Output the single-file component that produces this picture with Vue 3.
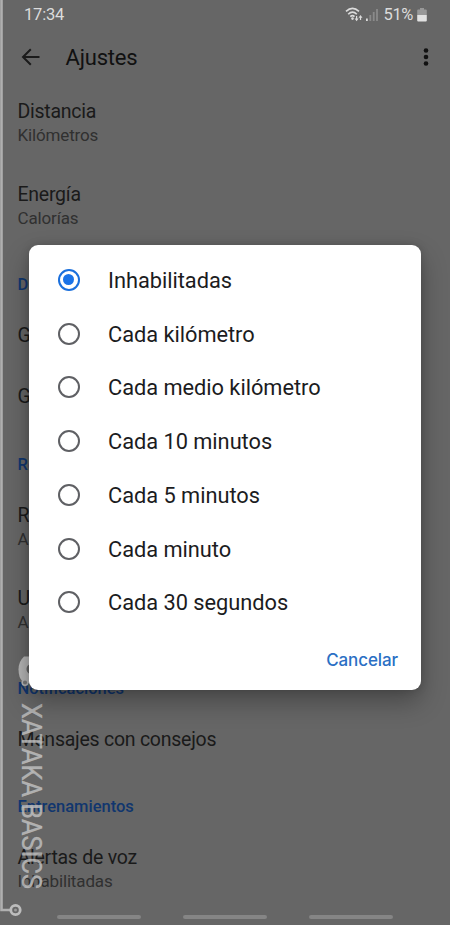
<script setup>
import { ref } from 'vue'

const options = [
  'Inhabilitadas',
  'Cada kilómetro',
  'Cada medio kilómetro',
  'Cada 10 minutos',
  'Cada 5 minutos',
  'Cada minuto',
  'Cada 30 segundos'
]

const selected = ref('Inhabilitadas')
const open = ref(true)

const settings = [
  { title: 'Distancia', value: 'Kilómetros' },
  { title: 'Energía', value: 'Calorías' },
  { header: 'D' },
  { title: 'G' },
  { title: 'G' },
  { header: 'Re' },
  { title: 'R', value: 'A' },
  { title: 'U', value: 'A' },
  { header: 'Notificaciones' },
  { title: 'Mensajes con consejos' },
  { header: 'Entrenamientos' },
  { title: 'Alertas de voz', value: 'Inhabilitadas' }
]
</script>

<template>
  <div class="screen">
    <header class="status-bar">
      <span class="clock">17:34</span>
      <div class="status-icons">
        <svg class="wifi" width="18" height="15" viewBox="0 0 18 15" fill="none">
          <path d="M1 4.4Q7.5-1.6 14 4.4M3.2 7.2Q7.5 3 11.8 7.2M5.3 9.6Q7.5 7.6 9.5 9.6" stroke="#dcdcdc" stroke-width="1.6" />
          <circle cx="7.5" cy="11.6" r="1.3" fill="#dcdcdc" />
          <path d="M9.6 11.4h4l-2 2.9zM13.5 10.8h4l-2-2.9z" fill="#dcdcdc" />
          <path d="M11.6 9v3M15.5 10v3" stroke="#dcdcdc" stroke-width="1.2" />
        </svg>
        <svg class="signal" width="12" height="13" viewBox="0 0 12 13">
          <path d="M0 10.5h1.8v2.5H0z" fill="#dcdcdc" />
          <path d="M3.4 7h1.8v6H3.4zM6.8 4h1.8v9H6.8zM10.1 1h1.8v12h-1.8z" fill="#8a8a8a" />
        </svg>
        <span class="percent">51%</span>
        <svg class="battery" width="10" height="14" viewBox="0 0 10 14">
          <path d="M3 0h4v1.5h1.8a1 1 0 0 1 1 1V7H.2V2.5a1 1 0 0 1 1-1H3z" fill="#989898" />
          <path d="M.2 7h9.6v5.5a1 1 0 0 1-1 1H1.2a1 1 0 0 1-1-1z" fill="#e2e2e2" />
        </svg>
      </div>
    </header>

    <div class="toolbar">
      <svg class="back" width="20" height="18" viewBox="0 0 20 18" fill="none" stroke="#1b1b1b" stroke-width="2">
        <path d="M18.5 9H2M9.8 1.2L2 9l7.8 7.8" />
      </svg>
      <h1>Ajustes</h1>
      <svg class="more" width="6" height="20" viewBox="0 0 6 20" fill="#111">
        <circle cx="3" cy="3.5" r="2.3" />
        <circle cx="3" cy="10" r="2.3" />
        <circle cx="3" cy="16.5" r="2.3" />
      </svg>
    </div>

    <main class="settings">
      <template v-for="(item, i) in settings" :key="i">
        <h2 v-if="item.header" class="section">{{ item.header }}</h2>
        <div v-else class="item" :class="{ double: item.value }">
          <span class="title">{{ item.title }}</span>
          <span v-if="item.value" class="value">{{ item.value }}</span>
        </div>
      </template>
    </main>

    <nav class="nav-hints">
      <span></span>
      <span></span>
      <span></span>
    </nav>

    <svg class="watermark" width="50" height="925" viewBox="0 0 50 925">
      <path d="M1.5 0V910H10" fill="none" stroke="#b0b0b0" stroke-width="2.6" />
      <circle cx="15.5" cy="910" r="4.7" fill="none" stroke="#bcbcbc" stroke-width="2.8" />
      <circle cx="15.5" cy="910" r="1.5" fill="#999" />
      <path d="M30 656.5h-6q-5.5 5-5.500 13t4 12l7.500 2z" fill="#b5b5b5" />
      <path d="M30 664q-3.500 1.500-3.500 5t3.500 5" fill="#666" />
      <circle cx="25" cy="682.5" r="2.8" fill="#777" stroke="#b5b5b5" stroke-width="1.5" />
      <text transform="translate(22.3 703) rotate(90)" textLength="186" lengthAdjust="spacingAndGlyphs">XATAKA BASICS</text>
    </svg>

    <div v-if="open" class="overlay">
      <div class="dialog" role="dialog">
        <div class="options">
          <label v-for="option in options" :key="option" class="option">
            <input v-model="selected" type="radio" name="voice" :value="option" />
            <span class="radio"></span>
            <span class="label">{{ option }}</span>
          </label>
        </div>
        <div class="actions">
          <button class="cancel" @click="open = false">Cancelar</button>
        </div>
      </div>
    </div>
  </div>
</template>

<style>
body {
  background: #666;
}
</style>

<style scoped>
.screen {
  position: relative;
  width: 450px;
  height: 925px;
  overflow: hidden;
  box-sizing: border-box;
  background: #666;
  font-family: Roboto, sans-serif;
  display: flex;
  flex-direction: column;
}

.status-bar {
  height: 29px;
  flex: none;
  padding: 0 23px 0 24px;
  display: flex;
  align-items: center;
  justify-content: space-between;
  color: #dcdcdc;
  font-size: 16.5px;
}

.clock {
  letter-spacing: -0.2px;
}

.percent {
  letter-spacing: -0.4px;
}

.status-icons {
  display: flex;
  align-items: center;
}

.signal {
  margin: 0 6px 0 3px;
}

.battery {
  margin-left: 4px;
}

.toolbar {
  height: 53px;
  flex: none;
  padding: 2px 21px 0 21px;
  box-sizing: border-box;
  display: flex;
  align-items: center;
}

.toolbar h1 {
  margin: 0 auto 0 24.5px;
  padding-top: 1px;
  font-size: 22px;
  font-weight: 400;
  letter-spacing: -0.2px;
  color: #111;
}

.settings {
  flex: 1;
  padding-left: 17.5px;
}

.section {
  height: 57.8px;
  margin: 0;
  padding-top: 27px;
  box-sizing: border-box;
  font-size: 16.5px;
  line-height: 20px;
  font-weight: 500;
  color: #11366e;
}

.item {
  height: 61px;
  padding-bottom: 1px;
  box-sizing: border-box;
  display: flex;
  flex-direction: column;
  justify-content: center;
}

.item.double {
  height: 83px;
}

.title {
  font-size: 19.5px;
  line-height: 25px;
  letter-spacing: -0.25px;
  color: #1a1a1a;
}

.value {
  font-size: 17px;
  line-height: 23px;
  letter-spacing: -0.15px;
  color: #303030;
}

.nav-hints {
  position: absolute;
  left: 57px;
  bottom: 6px;
  display: flex;
  gap: 42px;
}

.nav-hints span {
  width: 84px;
  height: 4px;
  border-radius: 2px;
  background: #858585;
}

.watermark {
  position: absolute;
  left: 0;
  top: 0;
}

.watermark text {
  font-size: 27px;
  fill: #c4c4c4;
  fill-opacity: 0.8;
  stroke: #c4c4c4;
  stroke-opacity: 0.5;
  stroke-width: 0.5px;
}

.overlay {
  position: absolute;
  inset: 0;
  padding: 245px 29px 0;
}

.dialog {
  height: 445px;
  box-sizing: border-box;
  padding-top: 8px;
  background: #fff;
  border-radius: 9px;
  box-shadow: 0 12px 26px rgba(0, 0, 0, 0.3), 0 0 8px rgba(0, 0, 0, 0.15);
}

.option {
  height: 53.75px;
  padding-left: 28.5px;
  display: flex;
  align-items: center;
  cursor: pointer;
}

.option input {
  position: absolute;
  opacity: 0;
}

.radio {
  width: 22px;
  height: 22px;
  box-sizing: border-box;
  border: 2px solid #5f6064;
  border-radius: 50%;
  display: flex;
  align-items: center;
  justify-content: center;
}

.option input:checked + .radio {
  border-color: #1a6fdc;
}

.option input:checked + .radio::after {
  content: '';
  width: 11px;
  height: 11px;
  border-radius: 50%;
  background: #1a73e8;
}

.label {
  margin-left: 28.5px;
  padding-top: 1px;
  font-size: 21.8px;
  letter-spacing: -0.03px;
  color: #1c1c1e;
}

.actions {
  display: flex;
  justify-content: flex-end;
  padding: 18.5px 23px 0;
}

.cancel {
  border: none;
  background: none;
  padding: 0;
  font-family: Inter, sans-serif;
  font-size: 17px;
  line-height: 24px;
  font-weight: 500;
  letter-spacing: -0.1px;
  color: #2a6fc4;
  cursor: pointer;
}
</style>
